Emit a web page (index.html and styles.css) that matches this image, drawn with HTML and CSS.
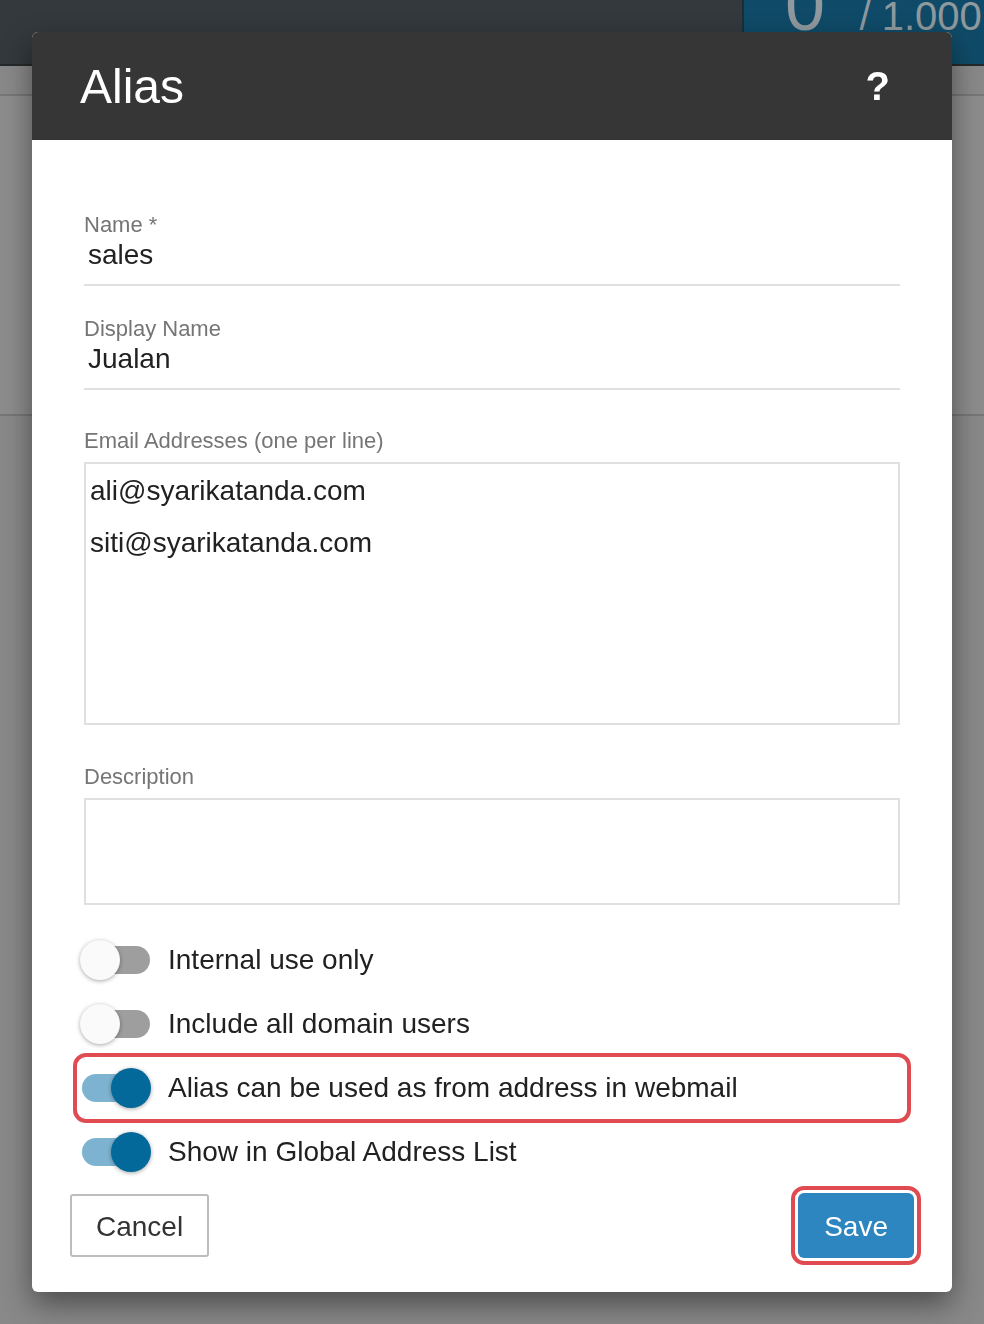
FILE: index.html
```html
<!DOCTYPE html>
<html lang="en">
<head>
    <meta charset="UTF-8">
    <meta name="viewport" content="width=device-width, initial-scale=1.0">
    <title>Alias</title>
    <link rel="stylesheet" href="styles.css">
</head>
<body>
    <div class="topbar">
        <div class="quota">
            <div class="quota-inner">
                <span class="quota-used">0</span>
                <span class="quota-total">/ 1.000</span>
            </div>
        </div>
    </div>
    <div class="page">
        <div class="panel"></div>
    </div>

    <div class="overlay">
        <div class="modal">
            <div class="modal-header">
                <h2>Alias</h2>
                <span class="help">?</span>
            </div>
            <div class="modal-body">
                <div class="field">
                    <label>Name *</label>
                    <div class="value">sales</div>
                </div>
                <div class="field">
                    <label>Display Name</label>
                    <div class="value">Jualan</div>
                </div>
                <div class="field boxed">
                    <label>Email Addresses (one per line)</label>
                    <div class="textarea tall">
                        <div>ali@syarikatanda.com</div>
                        <div>siti@syarikatanda.com</div>
                    </div>
                </div>
                <div class="field boxed">
                    <label>Description</label>
                    <div class="textarea short"></div>
                </div>
                <ul class="switches">
                    <li>
                        <span class="switch"></span>
                        <span class="switch-label">Internal use only</span>
                    </li>
                    <li>
                        <span class="switch"></span>
                        <span class="switch-label">Include all domain users</span>
                    </li>
                    <li class="marked">
                        <span class="switch on"></span>
                        <span class="switch-label">Alias can be used as from address in webmail</span>
                    </li>
                    <li>
                        <span class="switch on"></span>
                        <span class="switch-label">Show in Global Address List</span>
                    </li>
                </ul>
            </div>
            <div class="modal-footer">
                <button class="btn btn-cancel">Cancel</button>
                <button class="btn btn-save">Save</button>
            </div>
        </div>
    </div>
</body>
</html>
```

FILE: styles.css
```css
body {
    font-family: "Liberation Sans", Arial, sans-serif;
    margin: 0;
    padding: 0;
    background: #898989;
    height: 100vh;
    overflow: hidden;
}
.topbar {
    height: 64px;
    background: #33393d;
    border-bottom: 2px solid #26292b;
    display: flex;
    justify-content: flex-end;
}
.quota {
    width: 240px;
    height: 64px;
    background: #0f4b68;
    border-left: 2px solid #1d2d36;
    overflow: hidden;
}
.quota-inner {
    margin-top: -31px;
    padding-left: 41px;
    color: #8f999e;
    white-space: nowrap;
}
.quota-used {
    font-size: 72px;
    line-height: 72px;
}
.quota-total {
    font-size: 40px;
    margin-left: 30px;
}
.page {
    padding-top: 28px;
}
.panel {
    height: 318px;
    border-top: 2px solid #777;
    border-bottom: 2px solid #777;
    background: #8d8d8d;
}
.overlay {
    position: fixed;
    top: 0;
    left: 0;
    right: 0;
    bottom: 0;
    padding: 32px;
}
.modal {
    width: 920px;
    height: 1260px;
    background: #fff;
    border-radius: 6px;
    overflow: hidden;
    box-shadow: 0 12px 30px rgba(0, 0, 0, 0.45);
    display: flex;
    flex-direction: column;
}
.modal-header {
    height: 108px;
    background: #363636;
    color: #fff;
    display: flex;
    align-items: center;
    justify-content: space-between;
    padding: 0 62px 0 48px;
    flex-shrink: 0;
}
.modal-header h2 {
    margin: 0;
    font-size: 48px;
    font-weight: normal;
}
.help {
    font-size: 40px;
    font-weight: bold;
}
.modal-body {
    padding: 73px 52px 0;
}
.field {
    margin-bottom: 31px;
}
.field label {
    display: block;
    font-size: 22px;
    line-height: 24px;
    color: #757575;
}
.field .value {
    margin-top: 2px;
    padding: 0 4px 13px;
    font-size: 28px;
    line-height: 32px;
    color: #212121;
    border-bottom: 2px solid #e0e0e0;
}
.field.boxed {
    margin-top: 39px;
    margin-bottom: 0;
}
.field.boxed + .field.boxed {
    margin-top: 40px;
}
.textarea {
    margin-top: 9px;
    border: 2px solid #e0e0e0;
    padding: 1px 4px;
    font-size: 28px;
    line-height: 52px;
    color: #212121;
    box-sizing: border-box;
}
.textarea.tall {
    height: 263px;
}
.textarea.short {
    height: 107px;
}
.switches {
    list-style-type: none;
    margin: 23px -8px 0;
    padding: 0;
}
.switches li {
    height: 64px;
    display: flex;
    align-items: center;
    padding-left: 4px;
    border-radius: 10px;
}
.switches li.marked {
    outline: 4px solid #e04a51;
    outline-offset: -1px;
}
.switch {
    position: relative;
    width: 72px;
    height: 40px;
    flex-shrink: 0;
}
.switch::before {
    content: "";
    position: absolute;
    left: 2px;
    top: 6px;
    width: 68px;
    height: 28px;
    border-radius: 14px;
    background: #9e9e9e;
}
.switch::after {
    content: "";
    position: absolute;
    left: 0;
    top: 0;
    width: 40px;
    height: 40px;
    border-radius: 50%;
    background: #fafafa;
    box-shadow: 0 1px 4px rgba(0, 0, 0, 0.35);
}
.switch.on::before {
    background: #7db3d0;
}
.switch.on::after {
    left: 31px;
    background: #03699b;
}
.switch-label {
    margin-left: 16px;
    font-size: 28px;
    color: #212121;
}
.modal-footer {
    display: flex;
    justify-content: space-between;
    align-items: center;
    padding: 9px 38px 0;
}
.btn {
    font-family: "Liberation Sans", Arial, sans-serif;
    font-size: 28px;
    border-radius: 3px;
    cursor: pointer;
}
.btn-cancel {
    height: 63px;
    padding: 2px 24px 0;
    background: #fff;
    color: #333;
    border: 2px solid #bdbdbd;
}
.btn-save {
    height: 65px;
    padding: 2px 26px 0;
    background: #2e86c1;
    color: #fff;
    border: none;
    outline: 4px solid #e04a51;
    outline-offset: 3px;
    border-radius: 6px;
}
```
